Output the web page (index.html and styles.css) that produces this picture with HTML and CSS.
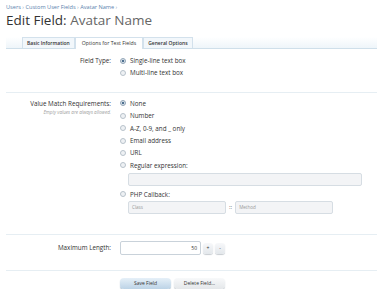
FILE: index.html
```html
<!DOCTYPE html>
<html lang="en">
  <head>
    <meta charset="UTF-8" />
    <title>Edit Field: Avatar Name</title>
    <link rel="stylesheet" href="styles.css">
  </head>
  <body>
    <div class="breadcrumb">
      <a href="#">Users</a> &rsaquo;
      <a href="#">Custom User Fields</a> &rsaquo;
      <a href="#">Avatar Name</a> &rsaquo;
    </div>
    <h1>Edit Field: <span class="title-name">Avatar Name</span></h1>

    <div class="tabs">
      <span class="tab">Basic Information</span>
      <span class="tab active">Options for Text Fields</span>
      <span class="tab">General Options</span>
    </div>

    <div class="section first">
      <div class="form-row">
        <div class="row-label">Field Type:</div>
        <ul class="choices">
          <li><span class="radio checked"></span>Single-line text box</li>
          <li><span class="radio"></span>Multi-line text box</li>
        </ul>
      </div>
    </div>

    <div class="section match">
      <div class="form-row">
        <div class="row-label">
          Value Match Requirements:
          <div class="hint">Empty values are always allowed.</div>
        </div>
        <ul class="choices">
          <li><span class="radio checked"></span>None</li>
          <li><span class="radio"></span>Number</li>
          <li><span class="radio"></span>A-Z, 0-9, and _ only</li>
          <li><span class="radio"></span>Email address</li>
          <li><span class="radio"></span>URL</li>
          <li>
            <span class="radio"></span>Regular expression:
            <div class="sub"><span class="textbox wide"></span></div>
          </li>
          <li>
            <span class="radio"></span>PHP Callback:
            <div class="sub last">
              <span class="textbox half">Class</span>
              <span class="sep">::</span>
              <span class="textbox half">Method</span>
            </div>
          </li>
        </ul>
      </div>
    </div>

    <div class="section length">
      <div class="form-row center">
        <div class="row-label">Maximum Length:</div>
        <div class="spin">
          <span class="textbox number">50</span>
          <span class="spin-btn">+</span>
          <span class="spin-btn">-</span>
        </div>
      </div>
    </div>

    <div class="actions">
      <span class="button primary">Save Field</span>
      <span class="button">Delete Field...</span>
    </div>
  </body>
</html>
```

FILE: styles.css
```css
body {
  margin: 0;
  font-family: "Open Sans", "DejaVu Sans", sans-serif;
  color: #333;
  background: #fff;
  width: 383px;
}

.breadcrumb {
  font-size: 5.6px;
  line-height: 8px;
  padding: 3px 6px 0;
  color: #8aa3bd;
}

.breadcrumb a {
  color: #5b82ad;
  text-decoration: none;
}

h1 {
  font-size: 13.5px;
  font-weight: normal;
  margin: 0 6px;
  line-height: 18px;
  color: #333;
}

.title-name {
  color: #666;
}

.tabs {
  display: flex;
  margin: 8px 6px 0 6px;
  padding-left: 16px;
  border-bottom: 1px solid #cfdfea;
  background: linear-gradient(to bottom, #ffffff, #eef5fa);
}

.tab {
  font-size: 5px;
  line-height: 10px;
  padding: 0 4px;
  border: 1px solid #d3e1ec;
  border-bottom: none;
  background: #f2f7fb;
  color: #333;
  font-weight: 600;
}

.tab.active {
  background: #fff;
  font-weight: normal;
  font-size: 5.2px;
  padding: 0 6px 1px;
  margin-bottom: -1px;
}

.section {
  margin: 0 6px;
  border-bottom: 1px solid #e6eef3;
}

.section.first {
  padding: 6px 0 12px;
}

.section.match {
  padding: 5px 0 0;
}

.section.length {
  padding: 6px 0 15px;
}

.form-row {
  display: flex;
  align-items: flex-start;
}

.form-row.center {
  align-items: center;
}

.row-label {
  width: 105px;
  text-align: right;
  font-size: 6.3px;
  line-height: 12px;
  padding-right: 9px;
  flex-shrink: 0;
}

.hint {
  font-size: 4.6px;
  line-height: 6px;
  font-style: italic;
  color: #a0a0a0;
  margin-top: -1px;
}

.choices {
  list-style: none;
  margin: 0;
  padding: 0;
  font-size: 6.3px;
  line-height: 12.4px;
  flex: 1;
}

.radio {
  display: inline-block;
  width: 4px;
  height: 4px;
  border: 1px solid #b8c2cb;
  border-radius: 50%;
  background: #eef1f4;
  margin-right: 4px;
  vertical-align: -0.5px;
}

.radio.checked {
  background: radial-gradient(circle, #4d6f8f 0, #4d6f8f 1.3px, #dfe7ee 1.6px);
  border-color: #8fa3b6;
}

.sub {
  padding-left: 8px;
  padding-right: 15px;
  display: flex;
  align-items: center;
  margin: 1px 0 3px;
}

.sub.last {
  margin: 0 0 20px;
}

.textbox {
  display: inline-block;
  box-sizing: border-box;
  height: 12.5px;
  border: 1px solid #d6dde3;
  border-radius: 2px;
  background: #f3f4f6;
  font-size: 4.6px;
  line-height: 10.5px;
  padding: 0 3px;
  color: #999;
}

.textbox.wide {
  width: 234px;
}

.textbox.half {
  width: 98px;
}

.sep {
  font-size: 6px;
  padding: 0 3px;
  color: #555;
}

.spin {
  display: flex;
  align-items: center;
  gap: 2px;
}

.textbox.number {
  width: 81px;
  height: 14px;
  line-height: 12px;
  background: #fff;
  color: #333;
  text-align: right;
  font-size: 5px;
  border-color: #c9d2da;
}

.spin-btn {
  width: 10px;
  height: 11px;
  line-height: 11px;
  margin-top: 2px;
  text-align: center;
  font-size: 5px;
  border-radius: 3px;
  background: linear-gradient(to bottom, #f7f8fa, #e3e7eb);
  box-shadow: 0 1px 1px #c7ccd1;
}

.actions {
  margin: 0 6px;
  padding: 7px 0 0 114px;
  display: flex;
  gap: 3px;
}

.button {
  font-size: 5px;
  line-height: 11.5px;
  width: 51px;
  text-align: center;
  border-radius: 4px;
  background: linear-gradient(to bottom, #f8f9fa, #e4e7ea);
  box-shadow: 0 1px 1px #b9c0c6;
  color: #333;
}

.button.primary {
  background: linear-gradient(to bottom, #e6f0f8, #bcd3e6);
  box-shadow: 0 1px 1px #9fb4c7;
}
```
